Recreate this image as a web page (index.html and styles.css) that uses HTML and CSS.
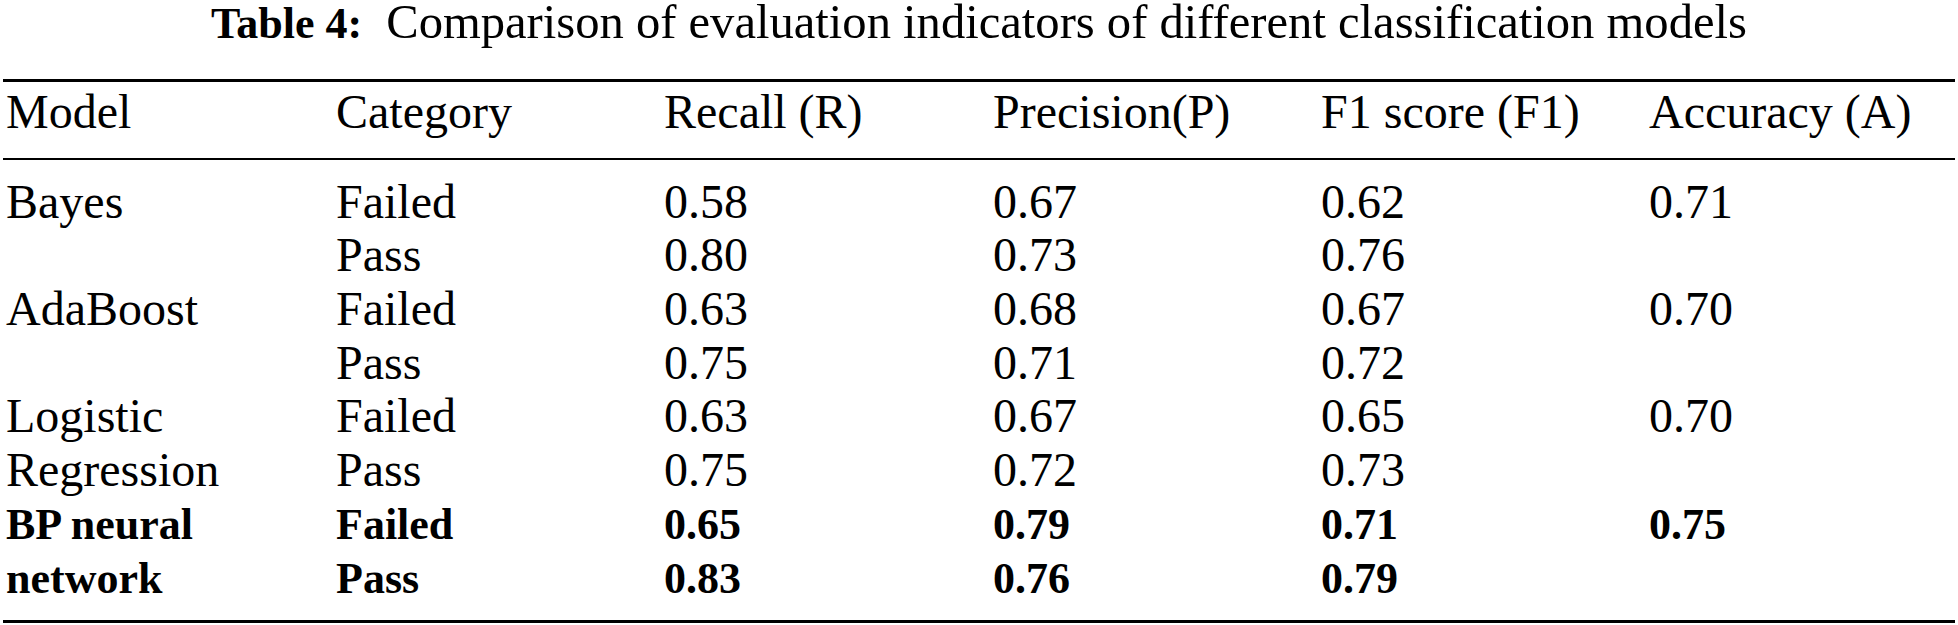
FILE: index.html
```html
<!DOCTYPE html>
<html lang="en">
<head>
<meta charset="utf-8">
<title>Table 4</title>
<link rel="stylesheet" href="styles.css">
</head>
<body>
<div class="figure">
  <div class="caption"><span class="label">Table 4:</span><span class="caption-text">Comparison of evaluation indicators of different classification models</span></div>
  <div class="table">
    <div class="row head">
      <div>Model</div><div>Category</div><div>Recall (R)</div><div>Precision(P)</div><div>F1 score (F1)</div><div>Accuracy (A)</div>
    </div>
    <div class="body">
      <div class="row"><div>Bayes</div><div>Failed</div><div>0.58</div><div>0.67</div><div>0.62</div><div>0.71</div></div>
      <div class="row"><div></div><div>Pass</div><div>0.80</div><div>0.73</div><div>0.76</div><div></div></div>
      <div class="row"><div>AdaBoost</div><div>Failed</div><div>0.63</div><div>0.68</div><div>0.67</div><div>0.70</div></div>
      <div class="row"><div></div><div>Pass</div><div>0.75</div><div>0.71</div><div>0.72</div><div></div></div>
      <div class="row"><div>Logistic</div><div>Failed</div><div>0.63</div><div>0.67</div><div>0.65</div><div>0.70</div></div>
      <div class="row"><div>Regression</div><div>Pass</div><div>0.75</div><div>0.72</div><div>0.73</div><div></div></div>
      <div class="row bold"><div>BP neural</div><div>Failed</div><div>0.65</div><div>0.79</div><div>0.71</div><div>0.75</div></div>
      <div class="row bold"><div>network</div><div>Pass</div><div>0.83</div><div>0.76</div><div>0.79</div><div></div></div>
    </div>
  </div>
</div>
</body>
</html>
```
FILE: styles.css
```css
html, body {
  margin: 0;
  padding: 0;
  background: #ffffff;
}
body {
  font-family: "Liberation Serif", "Times New Roman", serif;
  color: #000000;
  font-size: 48px;
}
.figure {
  width: 1958px;
}
.caption {
  text-align: center;
  line-height: 44px;
  height: 44px;
  white-space: nowrap;
}
.label {
  font-weight: bold;
  font-size: 44px;
}
.caption-text {
  margin-left: 24px;
  font-size: 48.6px;
}
.table {
  margin: 35px 3px 0 3px;
  border-top: 3px solid #000;
  border-bottom: 3px solid #000;
}
.row {
  display: grid;
  grid-template-columns: 330px 328px 329px 328px 328px auto;
  padding-left: 3px;
  line-height: 53.7px;
  height: 53.7px;
  white-space: nowrap;
}
.row.head {
  padding-top: 3px;
  padding-bottom: 19px;
  border-bottom: 2px solid #000;
}
.body {
  padding-top: 15px;
  padding-bottom: 16px;
}
.row.bold {
  font-weight: bold;
  font-size: 44px;
}
.row.bold > div {
  padding-top: 1px;
}
```
